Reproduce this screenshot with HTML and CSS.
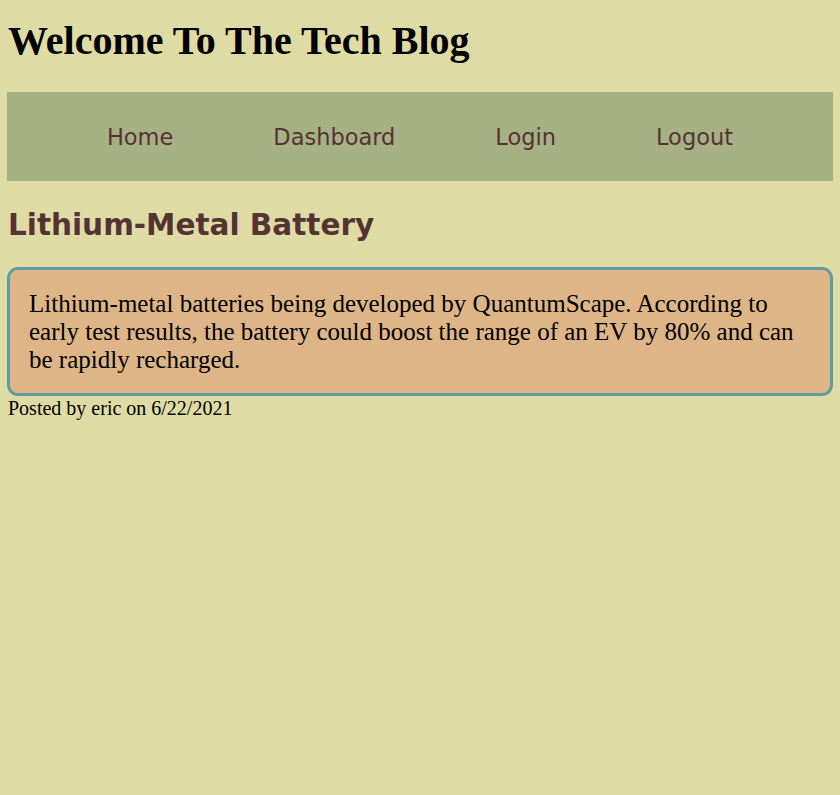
FILE: index.html
```html
<!DOCTYPE html>
<html>
<head>
<meta charset="utf-8">
<link rel="stylesheet" href="styles.css">
</head>
<body>
<header class="site-header">
  <h1 class="site-title">Welcome To The Tech Blog</h1>
  <nav class="nav">
    <a class="nav-link" href="#">Home</a>
    <a class="nav-link" href="#">Dashboard</a>
    <a class="nav-link" href="#">Login</a>
    <a class="nav-link" href="#">Logout</a>
  </nav>
</header>
<main>
  <h2 class="post-title">Lithium-Metal Battery</h2>
  <div class="post-card">
    <p class="post-body">Lithium-metal batteries being developed by QuantumScape. According to early test results, the battery could boost the range of an EV by 80% and can be rapidly recharged.</p>
  </div>
  <div class="post-meta">Posted by eric on 6/22/2021</div>
</main>
</body>
</html>
```
FILE: styles.css
```css
body {
  margin: 0;
  padding: 7px;
  background: #dfdba4;
  font-family: "Liberation Serif", "Times New Roman", serif;
  color: #000;
}
.site-title {
  font-size: 40px;
  line-height: 46px;
  font-weight: bold;
  margin: 11px 0 28px 1px;
}
.nav {
  display: flex;
  justify-content: space-evenly;
  align-items: center;
  height: 89px;
  background: #a5b083;
}
.nav-link {
  font-family: "DejaVu Sans", Verdana, sans-serif;
  font-size: 22.5px;
  color: #553333;
  text-decoration: none;
}
.post-title {
  font-family: "DejaVu Sans", Verdana, sans-serif;
  font-size: 29.5px;
  line-height: 35px;
  font-weight: bold;
  color: #553333;
  margin: 27px 0 24px 1px;
}
.post-card {
  background: #ddb587;
  border: 3px solid #5f9ea0;
  border-radius: 11px;
  padding: 20px 19px 19px;
}
.post-body {
  margin: 0;
  font-size: 25px;
  line-height: 28px;
}
.post-meta {
  font-size: 20px;
  line-height: 24px;
  margin-left: 1px;
}
```
